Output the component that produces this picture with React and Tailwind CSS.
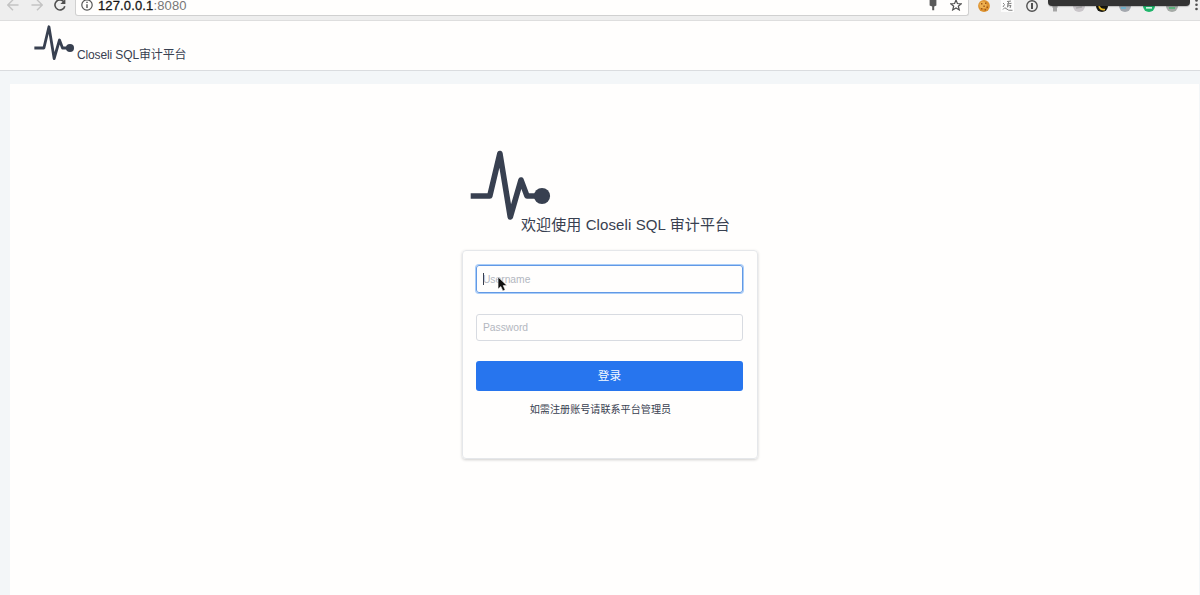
import React from "react";

function PulseLogo({ className }) {
  return (
    <svg viewBox="0 0 82 71" className={className} fill="none">
      <path
        d="M.7 46H19.8L29.9 3.5L40.3 67L51 30L57 46H70"
        stroke="#384050"
        strokeWidth="5.6"
        strokeLinejoin="round"
      />
      <circle cx="72" cy="46" r="8.1" fill="#384050" />
    </svg>
  );
}

function Arrow({ flip }) {
  return (
    <svg viewBox="0 0 12 12" className={flip ? "size-3 rotate-180" : "size-3"} fill="none" stroke="#c3c3c3" strokeWidth="1.4">
      <path d="M11.5 6H1.5M6 .8L.8 6L6 11.2" />
    </svg>
  );
}

function Reload() {
  return (
    <svg viewBox="0 0 12 12" className="size-3" fill="none">
      <path d="M10 3A5 5 0 1 0 10.8 7.2" stroke="#505050" strokeWidth="1.6" />
      <path d="M11.4 0V5H6.4Z" fill="#505050" />
    </svg>
  );
}

function Info() {
  return (
    <svg viewBox="0 0 12 12" className="size-3" fill="none" stroke="#555">
      <circle cx="6" cy="6" r="5.2" strokeWidth="1.2" />
      <path d="M6 5.2V9M6 2.8V4.1" strokeWidth="1.4" />
    </svg>
  );
}

function Key() {
  return (
    <svg viewBox="0 0 10 14" className="h-3.5 w-2.5" fill="#5a5a5a">
      <path d="M1.6 1H8.4V6.4L6.2 7.4V11.2H4.2V7.4L1.6 6.4Z" />
    </svg>
  );
}

function Star() {
  return (
    <svg viewBox="0 0 12 12" className="-mt-[2px] size-3" fill="none" stroke="#505050" strokeWidth="1.2">
      <path d="M6 1L7.4 4.5L11.2 4.8L8.3 7.2L9.3 10.9L6 8.9L2.7 10.9L3.7 7.2L.8 4.8L4.6 4.5Z" />
    </svg>
  );
}

function Cookie() {
  return (
    <svg viewBox="0 0 12 12" className="size-3">
      <circle cx="6" cy="6" r="5.9" fill="#dd922f" />
      <circle cx="5" cy="5" r="3.6" fill="#eeb04f" />
      <path d="M3 3h1.4v1.4H3zM7 2.5h1.4v1.4H7zM5.4 5.6h1.4V7H5.4zM8.6 6.5H10v1.4H8.6zM3 8h1.4v1.4H3zM6.6 9H8v1.4H6.6z" fill="#a05818" />
    </svg>
  );
}

function Sketch() {
  return (
    <svg viewBox="0 0 13 13" className="size-[13px]" fill="none">
      <rect width="13" height="13" fill="#fcfcfc" />
      <path d="M2 4L3.5 5.5L2 8M2 10.5Q4 7.5 5 9.5Q7 12 11.5 11.3M6 2.5L10 2M6 5L10.5 4.3M7.8 2.5L6.4 8.4M6 7.2L10 6.4L9 9" stroke="#808080" strokeWidth="1" />
    </svg>
  );
}

function OnePassword() {
  return (
    <svg viewBox="0 0 12 12" className="size-3" fill="none" stroke="#505050">
      <circle cx="6" cy="6" r="5.2" strokeWidth="1.4" />
      <path d="M6 3V9" strokeWidth="2" />
    </svg>
  );
}

function Lamp() {
  return (
    <svg viewBox="0 0 12 12" className="size-3" fill="#a5a5a5">
      <path d="M2.5 0H9.5L8.4 8H3.6ZM4 8H8V11.5H4Z" />
    </svg>
  );
}

function Disc({ base, mark, detail }) {
  return (
    <svg viewBox="0 0 12 12" className="size-3" fill="none">
      <circle cx="6" cy="6" r="6" fill={base} />
      <path d={detail} stroke={mark} strokeWidth="1.7" />
    </svg>
  );
}

function BrowserBar() {
  return (
    <div className="relative flex h-[21px] shrink-0 flex-col justify-end overflow-hidden border-b border-[#dedede] bg-[#eeeeee] pb-1">
      <div className="flex h-4 shrink-0 items-start">
        <div className="-mt-px flex w-[75px] shrink-0 items-center gap-[11.5px] pl-[7px]">
          <Arrow />
          <Arrow flip />
          <Reload />
        </div>
        <div className="flex h-4 w-[894px] shrink-0 items-start rounded-b-[3px] border border-t-0 border-[#d0d0d0] bg-[#fffefd] px-[5px]">
          <div className="-mt-px">
            <Info />
          </div>
          <span className="ml-[5px] text-[13px] leading-3 tracking-[0.14px] text-[#777]">
            <span className="text-[#161616] [-webkit-text-stroke:0.3px_#161616]">127.0.0.1</span>:8080
          </span>
          <div className="-mt-px mr-px ml-auto flex items-center gap-3">
            <Key />
            <Star />
          </div>
        </div>
        <div className="-mt-px flex shrink-0 items-center gap-[11.4px] pl-[9px]">
          <Cookie />
          <Sketch />
          <OnePassword />
          <Lamp />
          <Disc base="#c9c5c9" mark="#aaa" detail="M3 8L9 7" />
          <Disc base="#171711" mark="#e6b720" detail="M3 6Q4 10 9 9.5" />
          <Disc base="#a4a8ae" mark="#69b4d3" detail="M2 8L7 8" />
          <Disc base="#1fb66b" mark="#d8f5e5" detail="M3 7.8H9" />
          <Disc base="#a5aaa6" mark="#52b577" detail="M3 8H9" />
        </div>
        <svg viewBox="0 0 3 14" className="-mt-[3px] mr-[2px] ml-auto h-3.5 w-[3px] shrink-0" fill="#505050">
          <circle cx="1.5" cy="3.5" r="1.3" />
          <circle cx="1.5" cy="7.8" r="1.3" />
          <circle cx="1.5" cy="12" r="1.3" />
        </svg>
      </div>
      <div className="absolute top-0 right-[10px] h-[6px] w-[142px] rounded-b-[4px] bg-[#333333] shadow-[0_1px_1px_#0003]" />
    </div>
  );
}

function Header() {
  return (
    <header className="flex h-[50px] shrink-0 items-start border-b border-[#dadcdf] bg-[#fffefd] pl-[34px]">
      <PulseLogo className="mt-1 h-[35.5px] w-[41px]" />
      <span className="mt-[25px] ml-[2px] text-[12px] leading-[18px] tracking-[-0.13px] whitespace-nowrap">Closeli SQL审计平台</span>
    </header>
  );
}

function LoginForm() {
  return (
    <form
      className="ml-[451.5px] h-[209px] w-[296.5px] rounded-[4px] border border-[#e5e7ea] pt-[14px] pr-[14px] pl-[13.4px] shadow-[0_1px_3px_#00000030]"
      onSubmit={(event) => event.preventDefault()}
    >
      <div className="relative">
        <input
          aria-label="Username"
          placeholder="Username"
          className="block h-[28px] w-full rounded-[3px] border border-[#6299e5] px-[6px] text-[10.3px] shadow-[0_0_0_1px_#a9cdf8] outline-none placeholder:text-[#b3b7c0]"
        />
        <div className="absolute top-[8px] left-[7px] h-[12px] w-px bg-[#384050]" />
        <svg viewBox="0 0 10 15" className="absolute top-[11px] left-[21px] h-[16px] w-[10.7px]">
          <path d="M1 1V12.2L3.6 9.8L5.5 14L7.6 13L5.8 9H9.3Z" fill="#111" stroke="#fff" strokeWidth=".5" />
        </svg>
      </div>
      <input
        type="password"
        aria-label="Password"
        placeholder="Password"
        className="mt-[21px] block h-[27px] w-full rounded-[3px] border border-[#d8dbe1] px-[6px] text-[10.3px] outline-none placeholder:text-[#b3b7c0]"
      />
      <button className="mt-[20px] block h-[30.4px] w-full rounded-[3px] bg-[#2775ee] text-[11.6px] leading-[30px] text-[#f5faff]">登录</button>
      <p className="mt-[10px] pr-[18px] text-center text-[10.1px] leading-[18px]">如需注册账号请联系平台管理员</p>
    </form>
  );
}

export default function App() {
  return (
    <div className="flex h-[595px] w-[1200px] flex-col overflow-hidden bg-[#f3f6f8] font-['Liberation_Sans','Noto_Sans_CJK_SC',sans-serif] text-[#384050]">
      <BrowserBar />
      <Header />
      <main className="mt-[13px] mr-px ml-[10px] flex-1 bg-[#fffefd] pt-[66px]">
        <div className="ml-[460px] flex h-[100px] items-start">
          <PulseLogo className="h-[71px] w-[82px] shrink-0" />
          <h1 className="mt-[63px] -ml-[31px] text-[15px] leading-[24px] font-normal tracking-[0.1px] whitespace-nowrap">欢迎使用 Closeli SQL 审计平台</h1>
        </div>
        <LoginForm />
      </main>
    </div>
  );
}
